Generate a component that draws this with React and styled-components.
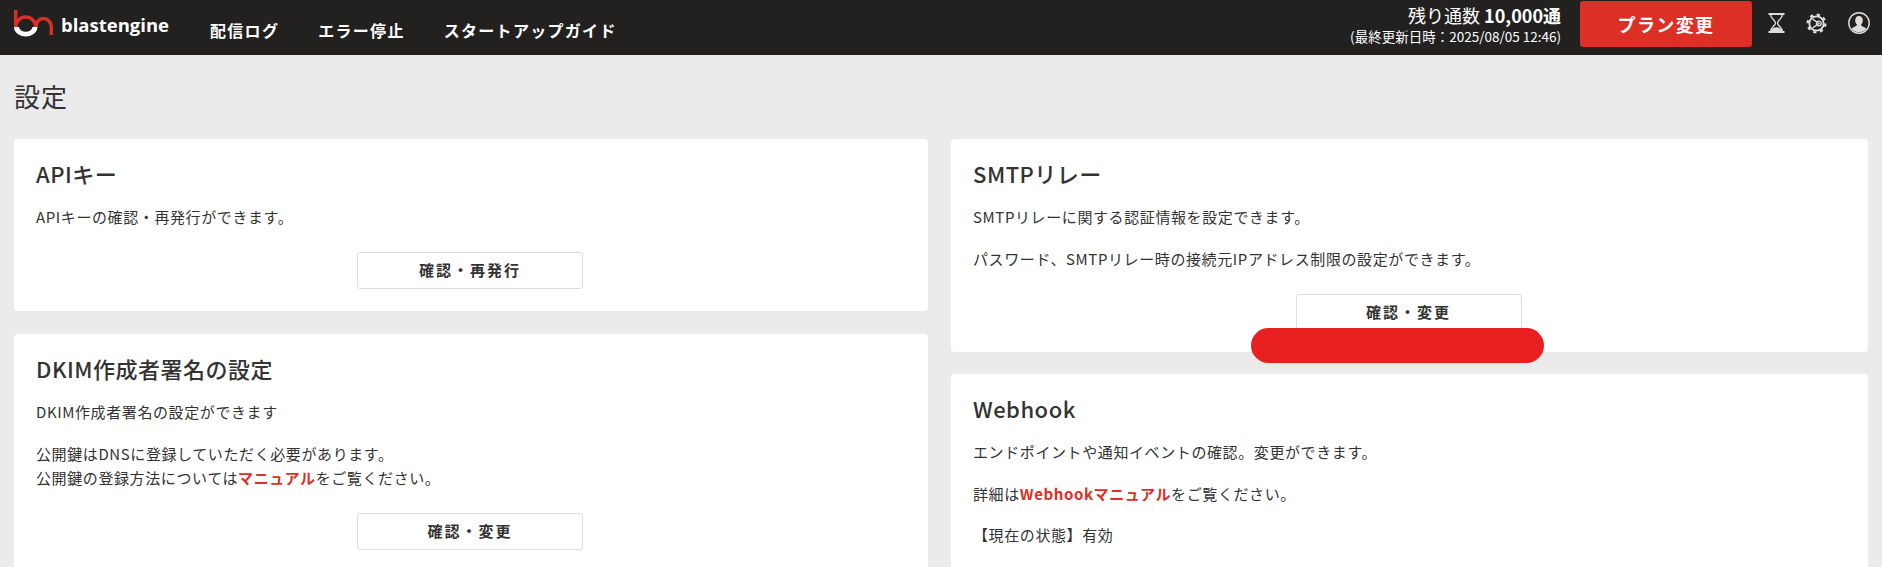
import React from "react";
import styled, { createGlobalStyle } from "styled-components";

const Global = createGlobalStyle`
  html, body { margin: 0; padding: 0; height: 567px; overflow: hidden; background: #ebebeb; }
  body { font-family: "Noto Sans CJK JP", "Noto Sans", sans-serif; color: #333; }
  * { box-sizing: border-box; }
`;
const Page = styled.div`position: relative; height: 567px; overflow: hidden;`;
const Header = styled.header`
  height: 55px; background: #222120; display: flex; align-items: flex-start; padding: 0 12px 0 14px;
`;
const Brand = styled.div`display: flex; align-items: center; gap: 8px; width: 196px; height: 46px;`;
const BrandName = styled.span`
  font-family: "Open Sans", sans-serif; font-weight: 700; font-size: 18.500px; color: #fff; margin-top: 3px;
`;
const Nav = styled.nav`display: flex; gap: 39px; padding-top: 18px;`;
const NavLink = styled.a`color: #fff; font-size: 16px; line-height: 24px; font-weight: 700; letter-spacing: 1.300px;`;
const Right = styled.div`margin-left: auto; display: flex; align-items: flex-start;`;
const Quota = styled.div`text-align: right; color: #fff; margin: 3px 19px 0 0;`;
const QuotaMain = styled.div`font-size: 18px; line-height: 24px; b { font-weight: 700; }`;
const QuotaSub = styled.div`font-size: 13.500px; line-height: 19px;`;
const PlanButton = styled.button`
  width: 172px; height: 46px; margin: 1px 16px 0 0; background: #dc2f25; color: #fff; border: 0; border-radius: 3px;
  font: 700 18px "Noto Sans CJK JP", sans-serif; letter-spacing: 1.400px;
`;
const Icons = styled.div`display: flex; align-items: center; gap: 21px; color: #ddd; height: 46px; svg { display: block; }`;
const PageTitle = styled.h1`
  margin: 0; padding: 23px 14px 0; height: 84px; font-size: 26px; font-weight: 400; line-height: 36px; letter-spacing: 1px; color: #333;
`;
const Columns = styled.div`display: grid; grid-template-columns: 914px 917px; gap: 23px; padding: 0 14px;`;
const Column = styled.div`display: flex; flex-direction: column; gap: ${p => p.$gap}px;`;
const Card = styled.section`
  background: #fff; border-radius: 4px; padding: 18px 24px 0 22px; height: ${p => p.$h}px;
`;
const CardTitle = styled.h2`margin: 0 0 15px; font-size: 22px; font-weight: 500; line-height: 33px; letter-spacing: 0.500px; color: #333;`;
const Text = styled.p`margin: 0 0 17.500px; font-size: 15px; line-height: 24px; letter-spacing: 0.600px; color: #333;`;
const Strong = styled.a`color: #dc2f25; font-weight: 700;`;
const Center = styled.div`display: flex; justify-content: center; margin-top: 23px;`;
const OutlineButton = styled.button`
  width: 226px; height: 37px; padding: 0 0 2px; background: #fff; border: 1px solid #ddd; border-radius: 3px;
  font: 700 15px "Noto Sans CJK JP", sans-serif; letter-spacing: 2px; color: #333;
`;
const Redaction = styled.div`
  position: absolute; left: 1251px; top: 328px; width: 293px; height: 35px; border-radius: 18px; background: #e71f1f;
`;
const LogoMark = styled.svg`display: block;`;

const Logo = () => (
  <LogoMark width="39" height="27" viewBox="0 0 39 27" fill="none">
    <path d="M1.700 0V17" stroke="#dc2f25" strokeWidth="3.400" />
    <path d="M1.700 17A10 10 0 0 1 21.700 17" stroke="#dc2f25" strokeWidth="3.400" />
    <path d="M0 17A11.700 9.500 0 0 0 23.400 17H18.500A6.800 5.500 0 0 1 5 17Z" fill="#fff" />
    <path d="M21.700 17A7.800 8.500 0 0 1 37.300 17V25" stroke="#dc2f25" strokeWidth="3.400" />
  </LogoMark>
);
const Hourglass = () => (
  <svg width="17" height="20" viewBox="0 0 16 20" fill="none" stroke="currentColor" strokeWidth="1.400">
    <path d="M0 1h16M0 19h16" strokeWidth="2" />
    <path d="M2 1c0 5 5 6 5 9S2 14 2 19M14 1c0 5-5 6-5 9s5 4 5 9" />
    <path d="M3 18.500c1-2.500 3-3.500 5-3.500s4 1 5 3.500z" fill="currentColor" />
  </svg>
);
const Gear = () => (
  <svg width="21" height="21" viewBox="0 0 22 22" fill="none" stroke="currentColor">
    <circle cx="11" cy="11" r="7.500" strokeWidth="2" />
    <circle cx="11" cy="11" r="9.300" strokeWidth="2.400" strokeDasharray="3.400 3.900" />
    <path d="M7 6.500 L13.500 11 L7 15.500M13.500 8.500a2.500 2.500 0 1 0 .01 0" strokeWidth="1.500" />
  </svg>
);
const User = () => (
  <svg width="22" height="22" viewBox="0 0 22 22" fill="none">
    <circle cx="11" cy="11" r="10.200" stroke="currentColor" strokeWidth="1.400" />
    <path d="M11 4c2.500 0 3.800 2 3.800 4.500 0 2-1 3.500-1.800 4.200 0 1.500 3.500 2 5.400 4A9.800 9.800 0 0 1 3.600 16.700c1.900-2 5.400-2.500 5.400-4C8.200 12 7.200 10.500 7.200 8.500 7.200 6 8.500 4 11 4z" fill="currentColor" />
  </svg>
);

export default function App() {
  return (
    <Page>
      <Global />
      <Header>
        <Brand><Logo /><BrandName>blastengine</BrandName></Brand>
        <Nav>
          <NavLink>配信ログ</NavLink>
          <NavLink>エラー停止</NavLink>
          <NavLink>スタートアップガイド</NavLink>
        </Nav>
        <Right>
          <Quota>
            <QuotaMain>残り通数 <b>10,000通</b></QuotaMain>
            <QuotaSub>(最終更新日時：2025/08/05 12:46)</QuotaSub>
          </Quota>
          <PlanButton>プラン変更</PlanButton>
          <Icons><Hourglass /><Gear /><User /></Icons>
        </Right>
      </Header>
      <PageTitle>設定</PageTitle>
      <Columns>
        <Column $gap={23}>
          <Card $h={172}>
            <CardTitle>APIキー</CardTitle>
            <Text>APIキーの確認・再発行ができます。</Text>
            <Center><OutlineButton>確認・再発行</OutlineButton></Center>
          </Card>
          <Card $h={300}>
            <CardTitle>DKIM作成者署名の設定</CardTitle>
            <Text>DKIM作成者署名の設定ができます</Text>
            <Text>公開鍵はDNSに登録していただく必要があります。<br />公開鍵の登録方法については<Strong>マニュアル</Strong>をご覧ください。</Text>
            <Center><OutlineButton>確認・変更</OutlineButton></Center>
          </Card>
        </Column>
        <Column $gap={22}>
          <Card $h={213}>
            <CardTitle>SMTPリレー</CardTitle>
            <Text>SMTPリレーに関する認証情報を設定できます。</Text>
            <Text>パスワード、SMTPリレー時の接続元IPアドレス制限の設定ができます。</Text>
            <Center><OutlineButton>確認・変更</OutlineButton></Center>
          </Card>
          <Card $h={300}>
            <CardTitle>Webhook</CardTitle>
            <Text>エンドポイントや通知イベントの確認。変更ができます。</Text>
            <Text>詳細は<Strong>Webhookマニュアル</Strong>をご覧ください。</Text>
            <Text>【現在の状態】有効</Text>
          </Card>
        </Column>
      </Columns>
      <Redaction />
    </Page>
  );
}
